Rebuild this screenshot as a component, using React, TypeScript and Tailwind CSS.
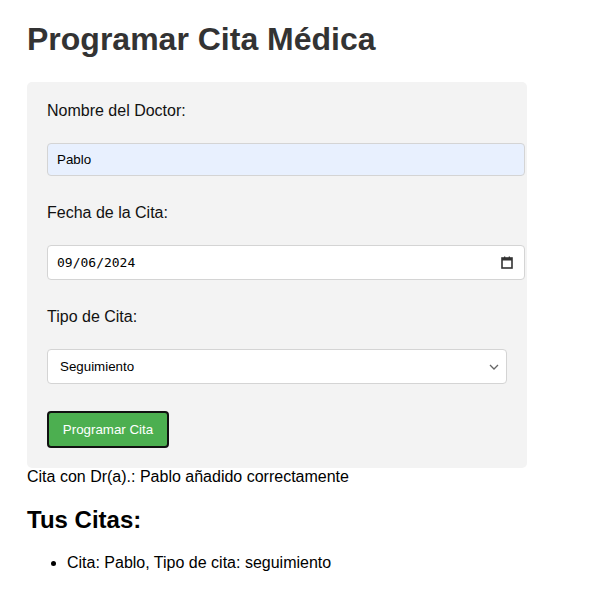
import React from "react";

export default function App() {
  return (
    <div
      className="min-h-[613px] bg-white pl-[27px] pt-[21px] text-black"
      style={{ fontFamily: '"Liberation Sans", Arial, sans-serif' }}
    >
      <h1 className="m-0 text-[32px] font-bold leading-[37px] text-[#333333]">
        Programar Cita Médica
      </h1>
      <div className="mt-[24px] w-[500px] rounded-[5px] bg-[#f3f3f3] p-[20px]">
        <label className="block text-[16px] leading-[18px] text-[#111]">Nombre del Doctor:</label>
        <div className="mt-[23px] flex h-[33px] w-[478px] items-center rounded-[4px] border border-[#d4d4d4] bg-[#e8f0fe] pl-[9px] text-[13.33px] text-black">
          Pablo
        </div>
        <label className="mt-[28px] block text-[16px] leading-[18px] text-[#111]">Fecha de la Cita:</label>
        <div className="mt-[23px] flex h-[35px] w-[478px] items-center justify-between rounded-[4px] border border-[#d4d4d4] bg-white pl-[9px] pr-[11px]">
          <span
            className="text-[13px] text-black"
            style={{ fontFamily: '"DejaVu Sans Mono", "Liberation Mono", monospace' }}
          >
            09/06/2024
          </span>
          <svg width="12" height="13" viewBox="0 0 12 13">
            <rect x="1" y="2" width="10" height="10" fill="none" stroke="#333" strokeWidth="1.6" />
            <rect x="1" y="2" width="10" height="2.5" fill="#333" />
            <rect x="3" y="0.5" width="1.3" height="2" fill="#333" />
            <rect x="7.7" y="0.5" width="1.3" height="2" fill="#333" />
          </svg>
        </div>
        <label className="mt-[28px] block text-[16px] leading-[18px] text-[#111]">Tipo de Cita:</label>
        <div className="mt-[23px] flex h-[35px] w-[460px] items-center justify-between rounded-[4px] border border-[#d4d4d4] bg-white pl-[12px] pr-[7px] text-[13.33px] text-black">
          <span>Seguimiento</span>
          <svg width="10" height="6" viewBox="0 0 10 6">
            <path d="M1 1 L5 5 L9 1" fill="none" stroke="#666" strokeWidth="1.3" />
          </svg>
        </div>
        <button className="mt-[27px] flex h-[37px] w-[122px] items-center justify-center rounded-[4px] border-2 border-[#111] bg-[#4caf50] text-[13.33px] text-white">
          Programar Cita
        </button>
      </div>
      <p className="m-0 text-[16px] leading-[18px] text-black">
        Cita con Dr(a).: Pablo añadido correctamente
      </p>
      <h2 className="mt-[20px] text-[24px] font-bold leading-[28px] text-black">Tus Citas:</h2>
      <ul className="mt-[20px] list-disc pl-[40px] text-[16px] leading-[18px] text-black">
        <li>Cita: Pablo, Tipo de cita: seguimiento</li>
      </ul>
    </div>
  );
}
